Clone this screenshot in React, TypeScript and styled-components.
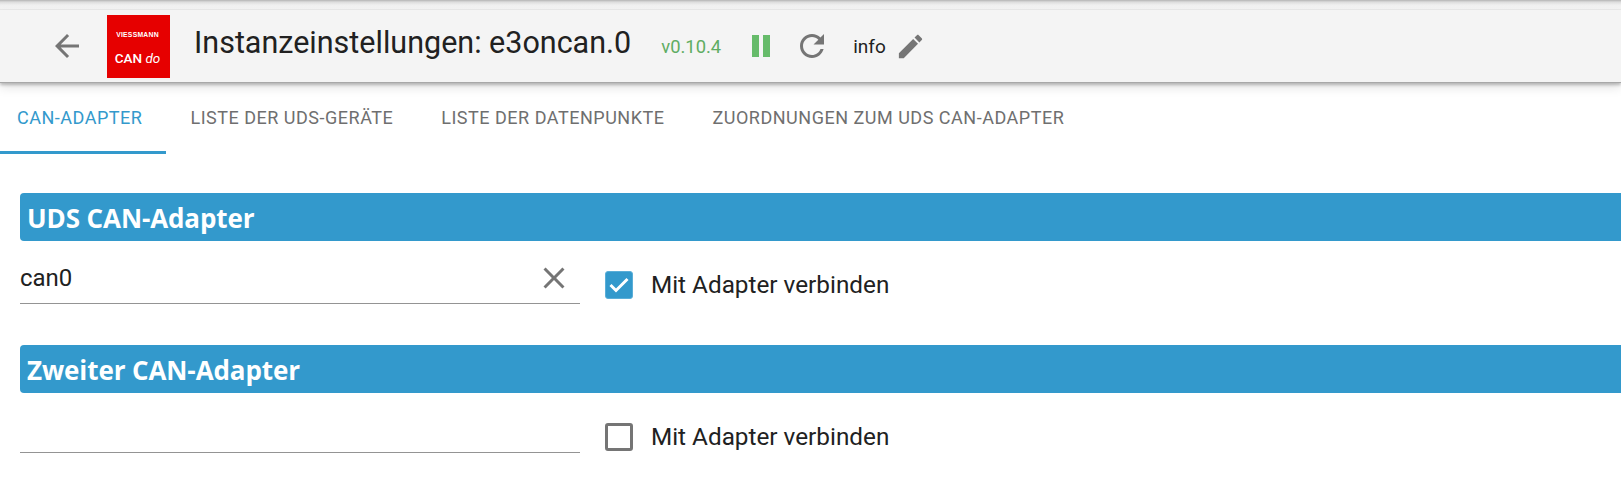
import React from 'react';
import styled, { createGlobalStyle } from 'styled-components';

const GlobalStyle = createGlobalStyle`
  html, body { margin: 0; padding: 0; background: #fff; overflow: hidden; }
  body { font-family: Roboto, "Liberation Sans", sans-serif; }
`;

const Page = styled.div`
  width: 1621px;
  height: 481px;
  overflow: hidden;
  display: flex;
  flex-direction: column;
  > * { flex: none; }
`;

const TopShade = styled.div`
  height: 9px;
  background: linear-gradient(to bottom, #b4b4b4 0, #dcdcdc 2px, #f0f0f0 5px, #f3f3f3 9px);
  border-bottom: 1px solid #e8e8e8;
`;

const Toolbar = styled.header`
  position: relative;
  z-index: 1;
  height: 72px;
  display: flex;
  align-items: center;
  padding-left: 49px;
  background: #f4f4f4;
  box-shadow: 0 1px 0 #a8a8a8, 0 3px 3px rgba(0, 0, 0, 0.24), 0 6px 10px rgba(0, 0, 0, 0.1);
`;

const BackIcon = styled.svg`
  width: 36px;
  height: 36px;
  fill: #757575;
  margin-right: 22px;
`;

const Logo = styled.div`
  width: 63px;
  height: 63px;
  box-sizing: border-box;
  padding-right: 2px;
  background: #e60000;
  color: #fff;
  display: flex;
  flex-direction: column;
  align-items: center;
  font-family: "Liberation Sans", Arial, sans-serif;
  margin-right: 24px;
`;

const LogoBrand = styled.span`
  font-size: 6.8px;
  font-weight: 700;
  letter-spacing: 0.25px;
  margin-top: 16px;
  line-height: 7px;
`;

const LogoName = styled.span`
  font-family: Roboto, sans-serif;
  font-size: 13.5px;
  font-weight: 500;
  margin-top: 13px;
  line-height: 15px;
  em { font-weight: 400; }
`;

const Title = styled.h1`
  margin: 0 30px 0 0;
  font-size: 30.5px;
  font-weight: 400;
  line-height: 36px;
  color: #212121;
  position: relative;
  top: -3px;
`;

const Version = styled.span`
  font-size: 18.4px;
  color: #5fad63;
  margin-right: 25px;
`;

const ToolIcon = styled.svg<{ $size: number; $mr: number }>`
  width: ${p => p.$size}px;
  height: ${p => p.$size}px;
  flex: none;
  fill: #757575;
  margin-right: ${p => p.$mr}px;
`;

const PauseIcon = styled(ToolIcon)`
  fill: #66bb6a;
`;

const InfoText = styled.span`
  font-size: 19px;
  color: #212121;
  margin-right: 9px;
`;

const Tabs = styled.nav`
  display: flex;
  height: 72px;
`;

const Tab = styled.div<{ $active?: boolean }>`
  height: 72px;
  box-sizing: border-box;
  padding: 2px 24px 0;
  padding-left: ${p => (p.$active ? 17 : 24)}px;
  display: flex;
  align-items: center;
  font-size: 18px;
  letter-spacing: 0.51px;
  text-transform: uppercase;
  color: ${p => (p.$active ? '#3399cc' : '#6f6f6f')};
  border-bottom: 3px solid ${p => (p.$active ? '#3399cc' : 'transparent')};
`;

const Content = styled.main`
  padding: 39px 0 0 20px;
  display: flex;
  flex-direction: column;
`;

const SectionHeader = styled.h2`
  margin: 0;
  height: 48px;
  box-sizing: border-box;
  padding: 2px 0 0 7px;
  display: flex;
  align-items: center;
  background: #3399cc;
  border-radius: 4px 0 0 4px;
  color: #fff;
  font-family: "Open Sans", "Noto Sans", sans-serif;
  font-size: 26px;
  font-weight: 700;
  letter-spacing: -0.1px;
`;

const FieldRow = styled.div`
  display: flex;
  height: 104px;
`;

const TextField = styled.div<{ $empty?: boolean }>`
  width: 560px;
  height: ${p => (p.$empty ? 60 : 63)}px;
  box-sizing: border-box;
  padding-top: 12px;
  border-bottom: 1px solid #949494;
  display: flex;
  align-items: center;
  justify-content: space-between;
  font-size: 24px;
  color: #212121;
`;

const ClearIcon = styled.svg`
  width: 36px;
  height: 36px;
  fill: #757575;
  margin-right: 8px;
`;

const CheckField = styled.label`
  display: flex;
  align-items: center;
  height: 87px;
  margin-left: 25px;
  font-size: 24.3px;
  color: #212121;
`;

const CheckBox = styled.span<{ $checked?: boolean }>`
  width: 28px;
  height: 28px;
  box-sizing: border-box;
  border-radius: 3px;
  margin-right: 18px;
  display: flex;
  align-items: center;
  justify-content: center;
  background: ${p => (p.$checked ? '#3399cc' : '#fff')};
  border: ${p => (p.$checked ? '1px solid #5aaed8' : '3px solid #757575')};
  svg { width: 20px; height: 16px; fill: none; stroke: #fff; stroke-width: 3; }
`;

const sections = [
  { title: 'UDS CAN-Adapter', value: 'can0', checked: true },
  { title: 'Zweiter CAN-Adapter', value: '', checked: false },
];

const tabs = ['CAN-Adapter', 'Liste der UDS-Geräte', 'Liste der Datenpunkte', 'Zuordnungen zum UDS CAN-Adapter'];

export default function App() {
  return (
    <Page>
      <GlobalStyle />
      <TopShade />
      <Toolbar>
        <BackIcon viewBox="0 0 24 24"><path d="M20 11H7.83l5.59-5.59L12 4l-8 8 8 8 1.41-1.41L7.83 13H20v-2z" /></BackIcon>
        <Logo>
          <LogoBrand>VIESSMANN</LogoBrand>
          <LogoName>CAN <em>do</em></LogoName>
        </Logo>
        <Title>Instanzeinstellungen: e3oncan.0</Title>
        <Version>v0.10.4</Version>
        <PauseIcon $size={30} $mr={18} viewBox="0 0 30 30"><path d="M6 4h7v22H6zM17 4h7v22h-7z" /></PauseIcon>
        <ToolIcon $size={36} $mr={23} viewBox="0 0 24 24"><path d="M17.65 6.35C16.2 4.9 14.21 4 12 4c-4.42 0-7.99 3.58-7.99 8s3.57 8 7.99 8c3.73 0 6.84-2.55 7.73-6h-2.08c-.82 2.33-3.04 4-5.65 4-3.31 0-6-2.69-6-6s2.69-6 6-6c1.66 0 3.14.69 4.22 1.78L13 11h7V4l-2.35 2.35z" /></ToolIcon>
        <InfoText>info</InfoText>
        <ToolIcon $size={31} $mr={0} viewBox="0 0 24 24"><path d="M3 17.25V21h3.75L17.81 9.94l-3.75-3.75L3 17.25zM20.71 7.04c.39-.39.39-1.02 0-1.41l-2.34-2.34c-.39-.39-1.02-.39-1.41 0l-1.83 1.83 3.75 3.75 1.83-1.83z" /></ToolIcon>
      </Toolbar>
      <Tabs>
        {tabs.map((t, i) => <Tab key={t} $active={i === 0}>{t}</Tab>)}
      </Tabs>
      <Content>
        {sections.map(s => (
          <React.Fragment key={s.title}>
            <SectionHeader>{s.title}</SectionHeader>
            <FieldRow>
              <TextField $empty={!s.value}>
                {s.value}
                {s.value && <ClearIcon viewBox="0 0 24 24"><path d="M19 6.41 17.59 5 12 10.59 6.41 5 5 6.41 10.59 12 5 17.59 6.41 19 12 13.41 17.59 19 19 17.59 13.41 12z" /></ClearIcon>}
              </TextField>
              <CheckField>
                <CheckBox $checked={s.checked}>
                  {s.checked && <svg viewBox="0 0 20 16"><path d="M1.5 8l5.5 5.5L18.5 2" /></svg>}
                </CheckBox>
                Mit Adapter verbinden
              </CheckField>
            </FieldRow>
          </React.Fragment>
        ))}
      </Content>
    </Page>
  );
}
